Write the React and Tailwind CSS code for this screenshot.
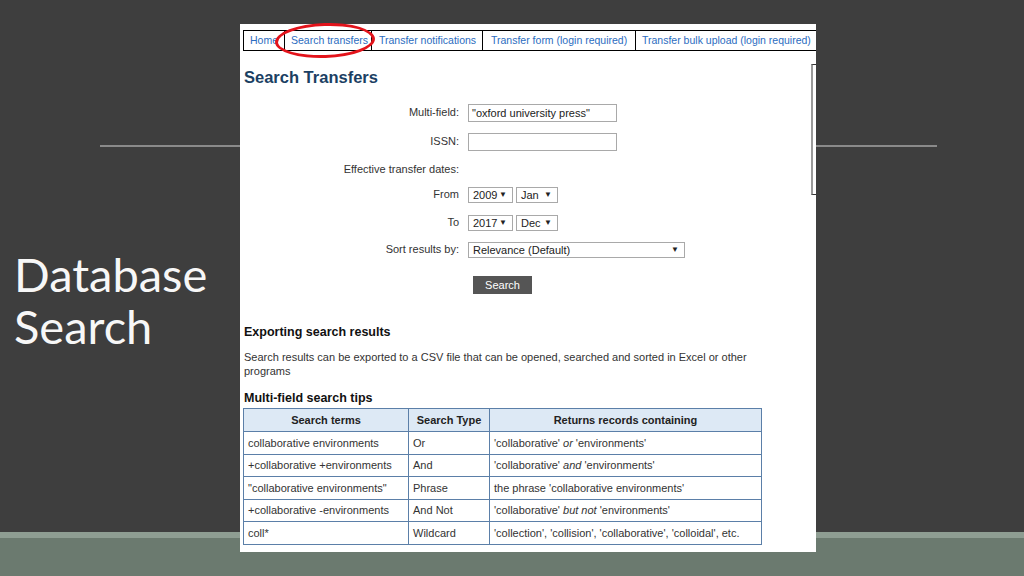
import React from 'react';

const navItems = [
  { label: 'Home', w: 'w-[40px]', pl: 'pl-[6px]' },
  { label: 'Search transfers', w: 'w-[87px]', pl: 'pl-[6px]' },
  { label: 'Transfer notifications', w: 'w-[111px]', pl: 'pl-[7px]' },
  { label: 'Transfer form (login required)', w: 'w-[153px]', pl: 'pl-[8px]' },
  { label: 'Transfer bulk upload (login required)', w: 'w-[190px]', pl: 'pl-[6px]' },
];

const tips = [
  { term: 'collaborative environments', type: 'Or', ret: <>'collaborative' <i>or</i> 'environments'</> },
  { term: '+collaborative +environments', type: 'And', ret: <>'collaborative' <i>and</i> 'environments'</> },
  { term: '"collaborative environments"', type: 'Phrase', ret: <>the phrase 'collaborative environments'</> },
  { term: '+collaborative -environments', type: 'And Not', ret: <>'collaborative' <i>but not</i> 'environments'</> },
  { term: 'coll*', type: 'Wildcard', ret: <>'collection', 'collision', 'collaborative', 'colloidal', etc.</> },
];

const Select = ({ value, w }) => (
  <div className={`${w} h-[16px] border border-[#a9a9a9] bg-white flex items-center justify-between pl-[4px] pr-[5px] text-[11px] leading-none text-[#222]`}>
    <span>{value}</span>
    <span className="text-[8px]">▼</span>
  </div>
);

const Row = ({ label, children, className = '' }) => (
  <div className={`flex items-center ${className}`}>
    <div className="w-[219px] text-right text-[11px] leading-[14px] text-[#333] -translate-y-[1px]">{label}</div>
    <div className="ml-[9px] flex gap-[3px]">{children}</div>
  </div>
);

export default function App() {
  return (
    <div className="relative w-[1024px] h-[576px] overflow-hidden bg-[#3e3e3e]" style={{ fontFamily: '"Liberation Sans", Arial, sans-serif' }}>
      {/* slide decorations behind the picture */}
      <div className="absolute left-[100px] top-[145px] w-[837px] h-[2px] bg-[#8a8a8a]" />
      <div className="absolute left-0 right-0 top-[532px] bottom-0 bg-[#6b7a6f] border-t-[6px] border-[#8e9d92]" />

      <div className="relative flex">
        {/* title */}
        <div className="w-[240px] pt-[248px] pl-[14px]">
          <h1 className="text-[47px] leading-[52px] text-[#f7f7f7]" style={{ fontFamily: 'Lato, "Open Sans", sans-serif' }}>
            Database
            <br />
            Search
          </h1>
        </div>

        {/* screenshot panel */}
        <div className="relative mt-[24px] w-[576px] h-[528px] bg-white">
          <div className="mt-[6px] ml-[3px] overflow-hidden">
            <div className="flex h-[21px] w-[700px] border border-black">
              {navItems.map((n, i) => (
                <div key={n.label} className={`${n.w} ${n.pl} shrink-0 flex items-center text-[10.5px] whitespace-nowrap text-[#2b6cc0] ${i > 0 ? 'border-l border-black' : ''}`}>
                  {n.label}
                </div>
              ))}
            </div>
          </div>

          <div className="absolute left-[35px] top-[-1px] w-[100px] h-[35px] rounded-[50%] border-[3px] border-[#e3131b] -rotate-2" />
          <div className="absolute right-0 top-[40px] w-[5px] h-[131px] border-l-2 border-y border-l-[#9a9a9a] border-y-[#333]" />

          <h2 className="mt-[16px] ml-[4px] text-[16.5px] leading-[20px] font-bold text-[#1b3f63]">Search Transfers</h2>

          <Row label="Multi-field:" className="mt-[17px]">
            <div className="w-[149px] h-[18px] border border-[#a9a9a9] flex items-center pl-[3px] text-[11px] text-[#222]">"oxford university press"</div>
          </Row>
          <Row label="ISSN:" className="mt-[11px]">
            <div className="w-[149px] h-[18px] border border-[#a9a9a9]" />
          </Row>
          <div className="mt-[11px] w-[219px] text-right text-[11px] leading-[14px] text-[#333]">Effective transfer dates:</div>
          <Row label="From" className="mt-[11px]">
            <Select value="2009" w="w-[45px]" />
            <Select value="Jan" w="w-[42px]" />
          </Row>
          <Row label="To" className="mt-[12px]">
            <Select value="2017" w="w-[45px]" />
            <Select value="Dec" w="w-[42px]" />
          </Row>
          <Row label="Sort results by:" className="mt-[11px]">
            <Select value="Relevance (Default)" w="w-[217px]" />
          </Row>
          <div className="mt-[18px] ml-[233px] w-[59px] h-[18px] bg-[#555] flex items-center justify-center text-[11px] text-white">Search</div>

          <h3 className="mt-[30px] ml-[4px] text-[12.5px] leading-[16px] font-bold text-[#111]">Exporting search results</h3>
          <p className="mt-[10px] ml-[4px] w-[522px] text-[11px] leading-[14px] text-[#333]">
            Search results can be exported to a CSV file that can be opened, searched and sorted in Excel or other programs
          </p>
          <h3 className="mt-[12px] ml-[4px] text-[12.5px] leading-[16px] font-bold text-[#111]">Multi-field search tips</h3>

          <table className="mt-[2px] ml-[3px] w-[519px] border-collapse text-[11px] text-[#333]">
            <thead>
              <tr className="h-[23px] bg-[#dde9f5]">
                <th className="w-[165px] border border-[#5b7fa8] font-bold text-[#222]">Search terms</th>
                <th className="w-[81px] border border-[#5b7fa8] font-bold text-[#222]">Search Type</th>
                <th className="border border-[#5b7fa8] font-bold text-[#222]">Returns records containing</th>
              </tr>
            </thead>
            <tbody>
              {tips.map((t) => (
                <tr key={t.term} className="h-[22.6px]">
                  <td className="border border-[#5b7fa8] pl-[4px]">{t.term}</td>
                  <td className="border border-[#5b7fa8] pl-[4px]">{t.type}</td>
                  <td className="border border-[#5b7fa8] pl-[4px]">{t.ret}</td>
                </tr>
              ))}
            </tbody>
          </table>
        </div>
      </div>
    </div>
  );
}
